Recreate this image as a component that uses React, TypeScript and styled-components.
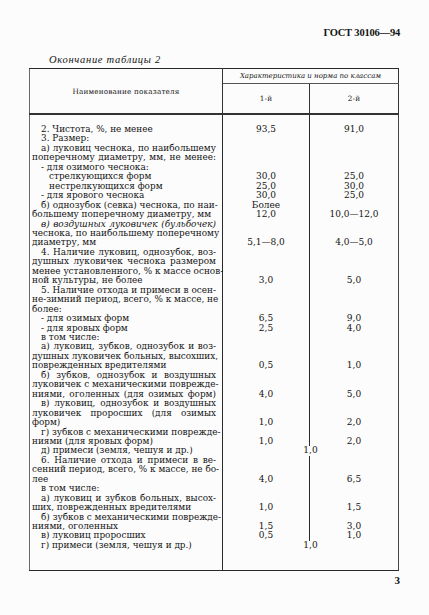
import { FC } from 'react';
import styled, { createGlobalStyle } from 'styled-components';

const GlobalStyle = createGlobalStyle`
  html, body {
    margin: 0;
    padding: 0;
    background: #fcfcfc;
  }
  body {
    font-family: 'DejaVu Serif', 'Liberation Serif', serif;
    color: #141414;
  }
`;

type Text = { t: string; i?: number; j?: boolean; it?: boolean };

type RowData = {
  lines: Text[];
  a?: string[];
  b?: string[];
  merged?: string;
};

// lines are kept as in the printed page, so breaks and hyphens stay where they are
const rows: RowData[] = [
  { lines: [{ t: '2. Чистота, %, не менее', i: 1 }], a: ['93,5'], b: ['91,0'] },
  { lines: [{ t: '3. Размер:', i: 1 }] },
  {
    lines: [
      { t: 'а) луковиц чеснока, по наибольшему', i: 1, j: true },
      { t: 'поперечному диаметру, мм, не менее:', j: true },
    ],
  },
  { lines: [{ t: '- для озимого чеснока:', i: 1 }] },
  { lines: [{ t: 'стрелкующихся форм', i: 2 }], a: ['30,0'], b: ['25,0'] },
  { lines: [{ t: 'нестрелкующихся форм', i: 2 }], a: ['25,0'], b: ['30,0'] },
  { lines: [{ t: '- для ярового чеснока', i: 1 }], a: ['30,0'], b: ['25,0'] },
  {
    lines: [
      { t: 'б) однозубок (севка) чеснока, по наи-', i: 1, j: true },
      { t: 'большему поперечному диаметру, мм' },
    ],
    a: ['Более', '12,0'],
    b: ['10,0—12,0'],
  },
  {
    lines: [
      { t: 'в) воздушных луковичек (бульбочек)', i: 1, j: true, it: true },
      { t: 'чеснока, по наибольшему поперечному', j: true },
      { t: 'диаметру, мм' },
    ],
    a: ['5,1—8,0'],
    b: ['4,0—5,0'],
  },
  {
    lines: [
      { t: '4. Наличие луковиц, однозубок, воз-', i: 1, j: true },
      { t: 'душных луковичек чеснока размером', j: true },
      { t: 'менее установленного, % к массе основ-', j: true },
      { t: 'ной культуры, не более' },
    ],
    a: ['3,0'],
    b: ['5,0'],
  },
  {
    lines: [
      { t: '5. Наличие отхода и примеси в осен-', i: 1, j: true },
      { t: 'не-зимний период, всего, % к массе, не', j: true },
      { t: 'более:' },
    ],
  },
  { lines: [{ t: '- для озимых форм', i: 1 }], a: ['6,5'], b: ['9,0'] },
  { lines: [{ t: '- для яровых форм', i: 1 }], a: ['2,5'], b: ['4,0'] },
  { lines: [{ t: 'в том числе:', i: 1 }] },
  {
    lines: [
      { t: 'а) луковиц, зубков, однозубок и воз-', i: 1, j: true },
      { t: 'душных луковичек больных, высохших,', j: true },
      { t: 'поврежденных вредителями' },
    ],
    a: ['0,5'],
    b: ['1,0'],
  },
  {
    lines: [
      { t: 'б) зубков, однозубок и воздушных', i: 1, j: true },
      { t: 'луковичек с механическими поврежде-', j: true },
      { t: 'ниями, оголенных (для озимых форм)', j: true },
    ],
    a: ['4,0'],
    b: ['5,0'],
  },
  {
    lines: [
      { t: 'в) луковиц, однозубок и воздушных', i: 1, j: true },
      { t: 'луковичек проросших (для озимых', j: true },
      { t: 'форм)' },
    ],
    a: ['1,0'],
    b: ['2,0'],
  },
  {
    lines: [
      { t: 'г) зубков с механическими поврежде-', i: 1, j: true },
      { t: 'ниями (для яровых форм)' },
    ],
    a: ['1,0'],
    b: ['2,0'],
  },
  { lines: [{ t: 'д) примеси (земля, чешуя и др.)', i: 1 }], merged: '1,0' },
  {
    lines: [
      { t: '6. Наличие отхода и примеси в ве-', i: 1, j: true },
      { t: 'сенний период, всего, % к массе, не бо-', j: true },
      { t: 'лее' },
    ],
    a: ['4,0'],
    b: ['6,5'],
  },
  { lines: [{ t: 'в том числе:', i: 1 }] },
  {
    lines: [
      { t: 'а) луковиц и зубков больных, высох-', i: 1, j: true },
      { t: 'ших, поврежденных вредителями' },
    ],
    a: ['1,0'],
    b: ['1,5'],
  },
  {
    lines: [
      { t: 'б) зубков с механическими поврежде-', i: 1, j: true },
      { t: 'ниями, оголенных' },
    ],
    a: ['1,5'],
    b: ['3,0'],
  },
  { lines: [{ t: 'в) луковиц проросших', i: 1 }], a: ['0,5'], b: ['1,0'] },
  { lines: [{ t: 'г) примеси (земля, чешуя и др.)', i: 1 }], merged: '1,0' },
];

const Page = styled.div`
  width: 429px;
  height: 615px;
  overflow: hidden;
`;

const Standard = styled.div`
  display: flex;
  justify-content: flex-end;
  padding: 26px 29px 0 0;
  font-family: 'Liberation Serif', serif;
  font-weight: bold;
  font-size: 10.5px;
  line-height: 14px;
  letter-spacing: -0.2px;
`;

const Caption = styled.div`
  margin: 14px 0 0 49px;
  font-family: 'Liberation Serif', serif;
  font-style: italic;
  font-size: 10.5px;
  line-height: 12px;
  letter-spacing: 0.7px;
`;

const Table = styled.table`
  margin: 2px 0 0 29px;
  width: 369px;
  border-collapse: collapse;
  table-layout: fixed;
  border-top: 1.5px solid #2a2a2a;
  border-bottom: 1.5px solid #2a2a2a;
  border-left: 1px solid #6a6a6a;
  border-right: 1px solid #444;
`;

const HeadCell = styled.th<{ $italic?: boolean; $h: number; $rule?: boolean }>`
  height: ${(p) => p.$h}px;
  padding: 0;
  font-weight: normal;
  font-style: ${(p) => (p.$italic ? 'italic' : 'normal')};
  font-size: ${(p) => (p.$italic ? 7 : 7.3)}px;
  letter-spacing: ${(p) => (p.$italic ? 0 : 0.15)}px;
  text-align: center;
  vertical-align: middle;
  border-bottom: ${(p) => (p.$rule ? '1px solid #555' : '2px solid #333')};
  border-right: 1px solid #333;
`;

const TextCell = styled.td<{ $top: number; $bottom: number }>`
  padding: ${(p) => p.$top}px 6px ${(p) => p.$bottom}px 2px;
  vertical-align: top;
  border-right: 1px solid #2a2a2a;
`;

const ValueCell = styled.td<{ $top: number; $bottom: number; $divider?: boolean }>`
  padding: ${(p) => p.$top}px 0 ${(p) => p.$bottom}px;
  vertical-align: bottom;
  text-align: center;
  font-size: 9px;
  line-height: 9.45px;
  border-left: ${(p) => (p.$divider ? '1px solid #2a2a2a' : 'none')};
`;

const Line = styled.div<{ $indent: number; $justify?: boolean; $italic?: boolean }>`
  padding-left: ${(p) => p.$indent}px;
  font-size: 8.9px;
  line-height: 9.45px;
  white-space: nowrap;
  font-style: ${(p) => (p.$italic ? 'italic' : 'normal')};
  text-align: ${(p) => (p.$justify ? 'justify' : 'left')};
  text-align-last: ${(p) => (p.$justify ? 'justify' : 'left')};
`;

const PageNumber = styled.div`
  display: flex;
  justify-content: flex-end;
  padding: 3px 29px 0 0;
  font-family: 'Liberation Serif', serif;
  font-weight: bold;
  font-size: 11px;
  line-height: 12px;
`;

const indents = [0, 9, 17];

const Values: FC<{ items?: string[] }> = ({ items }) => (
  <>
    {(items ?? []).map((v, k) => (
      <div key={k}>{v}</div>
    ))}
  </>
);

const Body: FC = () => (
  <tbody>
    {rows.map((r, n) => {
      const top = n === 0 ? 10 : 0;
      const bottom = n === rows.length - 1 ? 20 : 0;
      return (
        <tr key={n}>
          <TextCell $top={top} $bottom={bottom}>
            {r.lines.map((l, k) => (
              <Line key={k} $indent={indents[l.i ?? 0]} $justify={l.j} $italic={l.it}>
                {l.t}
              </Line>
            ))}
          </TextCell>
          {r.merged ? (
            <ValueCell colSpan={2} $top={top} $bottom={bottom}>
              {r.merged}
            </ValueCell>
          ) : (
            <>
              <ValueCell $top={top} $bottom={bottom}>
                <Values items={r.a} />
              </ValueCell>
              <ValueCell $top={top} $bottom={bottom} $divider>
                <Values items={r.b} />
              </ValueCell>
            </>
          )}
        </tr>
      );
    })}
  </tbody>
);

export default function App() {
  return (
    <Page>
      <GlobalStyle />
      <Standard>ГОСТ 30106—94</Standard>
      <Caption>Окончание таблицы 2</Caption>
      <Table>
        <colgroup>
          <col style={{ width: 193 }} />
          <col style={{ width: 87 }} />
          <col style={{ width: 89 }} />
        </colgroup>
        <thead>
          <tr>
            <HeadCell rowSpan={2} $h={14}>
              Наименование показателя
            </HeadCell>
            <HeadCell colSpan={2} $h={14} $italic $rule>
              Характеристика и норма по классам
            </HeadCell>
          </tr>
          <tr>
            <HeadCell $h={29}>1-й</HeadCell>
            <HeadCell $h={29}>2-й</HeadCell>
          </tr>
        </thead>
        <Body />
      </Table>
      <PageNumber>3</PageNumber>
    </Page>
  );
}
